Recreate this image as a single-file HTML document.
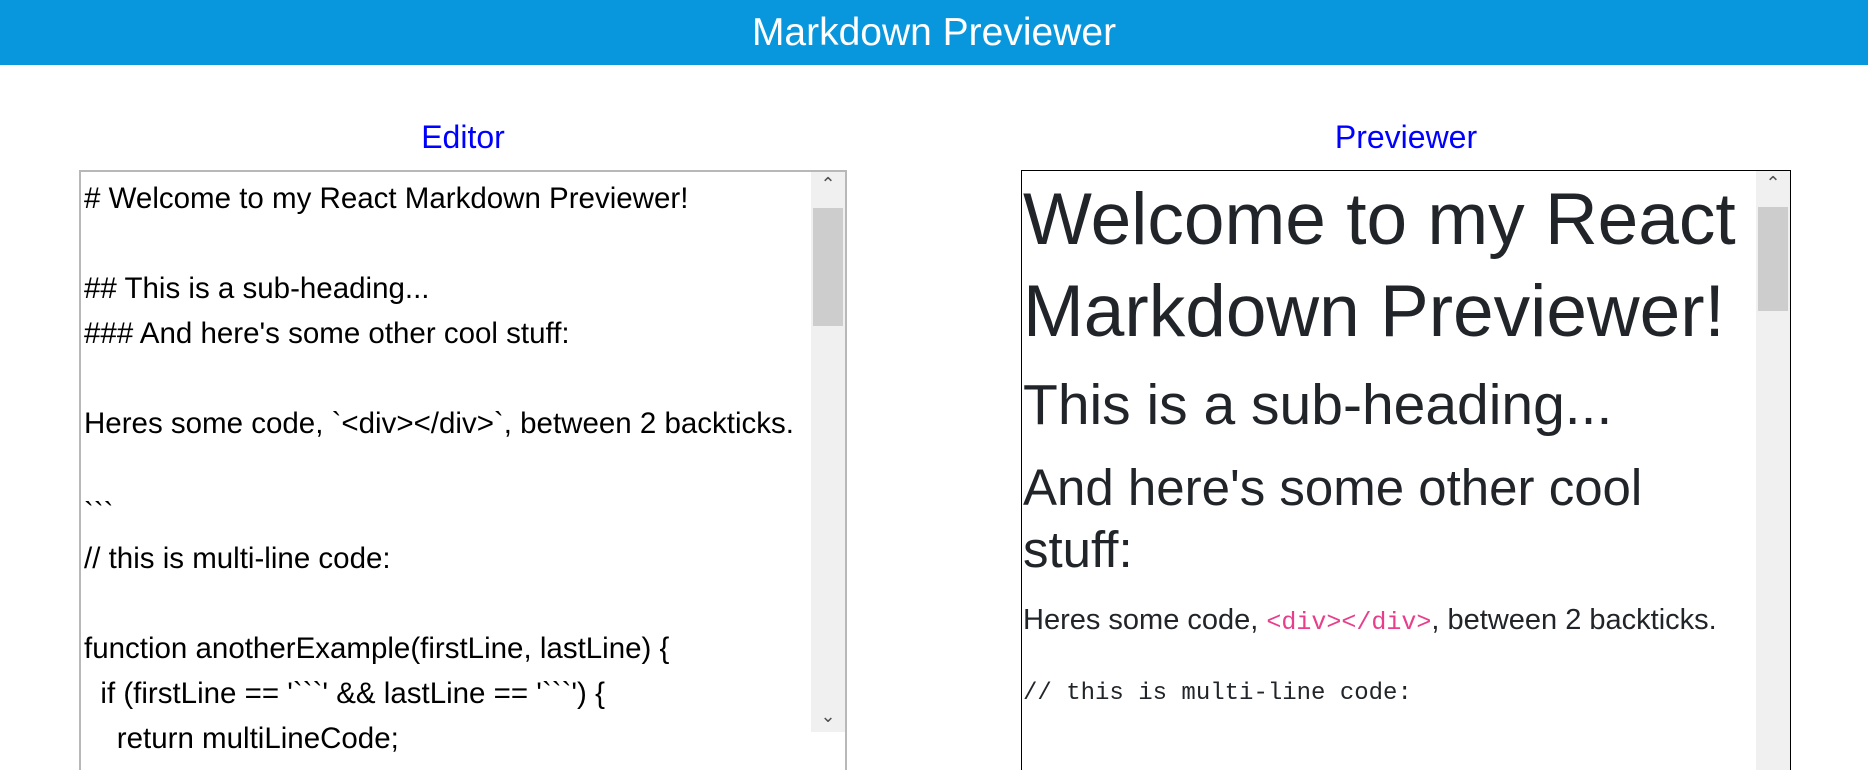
<!DOCTYPE html>
<html><head><meta charset="utf-8"><style>
html,body{margin:0;padding:0;width:1868px;height:749px;overflow:hidden;background:#fff;font-family:"Liberation Sans",sans-serif;}
.hdr{position:absolute;left:0;top:0;width:1868px;height:65px;background:#0896dc;color:#fff;font-size:39px;text-align:center;line-height:65px;}
.lbl{position:absolute;top:117px;font-size:32px;color:#0000ff;text-align:center;width:400px;line-height:40px;}
.ed{position:absolute;left:79px;top:170px;width:768px;height:600px;border:2px solid #b8b8b8;border-bottom:none;box-sizing:border-box;overflow:hidden;}
.ed pre{margin:0;padding:4px 0 0 3px;font-family:"Liberation Sans",sans-serif;font-size:29.5px;line-height:45px;color:#000;white-space:pre;}
.pv{position:absolute;left:1021px;top:170px;width:770px;height:600px;border:1px solid #000;border-bottom:none;box-sizing:border-box;overflow:hidden;color:#212529;}
.sb{position:absolute;top:0;right:0;width:34px;bottom:0;background:#f0f0f0;}
.th{position:absolute;left:2px;right:2px;top:36px;background:#cdcdcd;}
.ar{position:absolute;left:0;width:34px;text-align:center;font-size:18px;color:#505050;}
h1,h2,h3,p{margin:0;font-weight:normal;}
h1{font-size:73px;line-height:92px;margin-top:3px;white-space:nowrap;}
h2{font-size:57px;line-height:62px;margin-top:16px;white-space:nowrap;}
h3{font-size:51px;line-height:62px;margin-top:21px;width:720px;}
p{font-size:29px;line-height:30px;margin-top:24px;white-space:nowrap;}
code{font-family:"Liberation Mono",monospace;font-size:25px;color:#e83e8c;}
.cb{font-family:"Liberation Mono",monospace;font-size:24px;margin-top:41px;line-height:30px;}
</style></head><body>
<div class="hdr">Markdown Previewer</div>
<div class="lbl" style="left:263px">Editor</div>
<div class="lbl" style="left:1206px">Previewer</div>
<div class="ed"><pre># Welcome to my React Markdown Previewer!

## This is a sub-heading...
### And here's some other cool stuff:

Heres some code, &#96;&lt;div&gt;&lt;/div&gt;&#96;, between 2 backticks.

&#96;&#96;&#96;
// this is multi-line code:

function anotherExample(firstLine, lastLine) {
  if (firstLine == '&#96;&#96;&#96;' &amp;&amp; lastLine == '&#96;&#96;&#96;') {
    return multiLineCode;</pre>
<div class="sb" style="height:560px"><div class="ar" style="top:2px">&#8963;</div><div class="th" style="height:118px"></div><div class="ar" style="top:534px">&#8964;</div></div>
</div>
<div class="pv">
<div style="padding-left:1px">
<h1>Welcome to my React<br>Markdown Previewer!</h1>
<h2>This is a sub-heading...</h2>
<h3>And here's some other cool<br>stuff:</h3>
<p>Heres some code, <code>&lt;div&gt;&lt;/div&gt;</code>, between 2 backticks.</p>
<div class="cb">// this is multi-line code:</div>
</div>
<div class="sb"><div class="ar" style="top:2px">&#8963;</div><div class="th" style="height:104px"></div></div>
</div>
</body></html>
